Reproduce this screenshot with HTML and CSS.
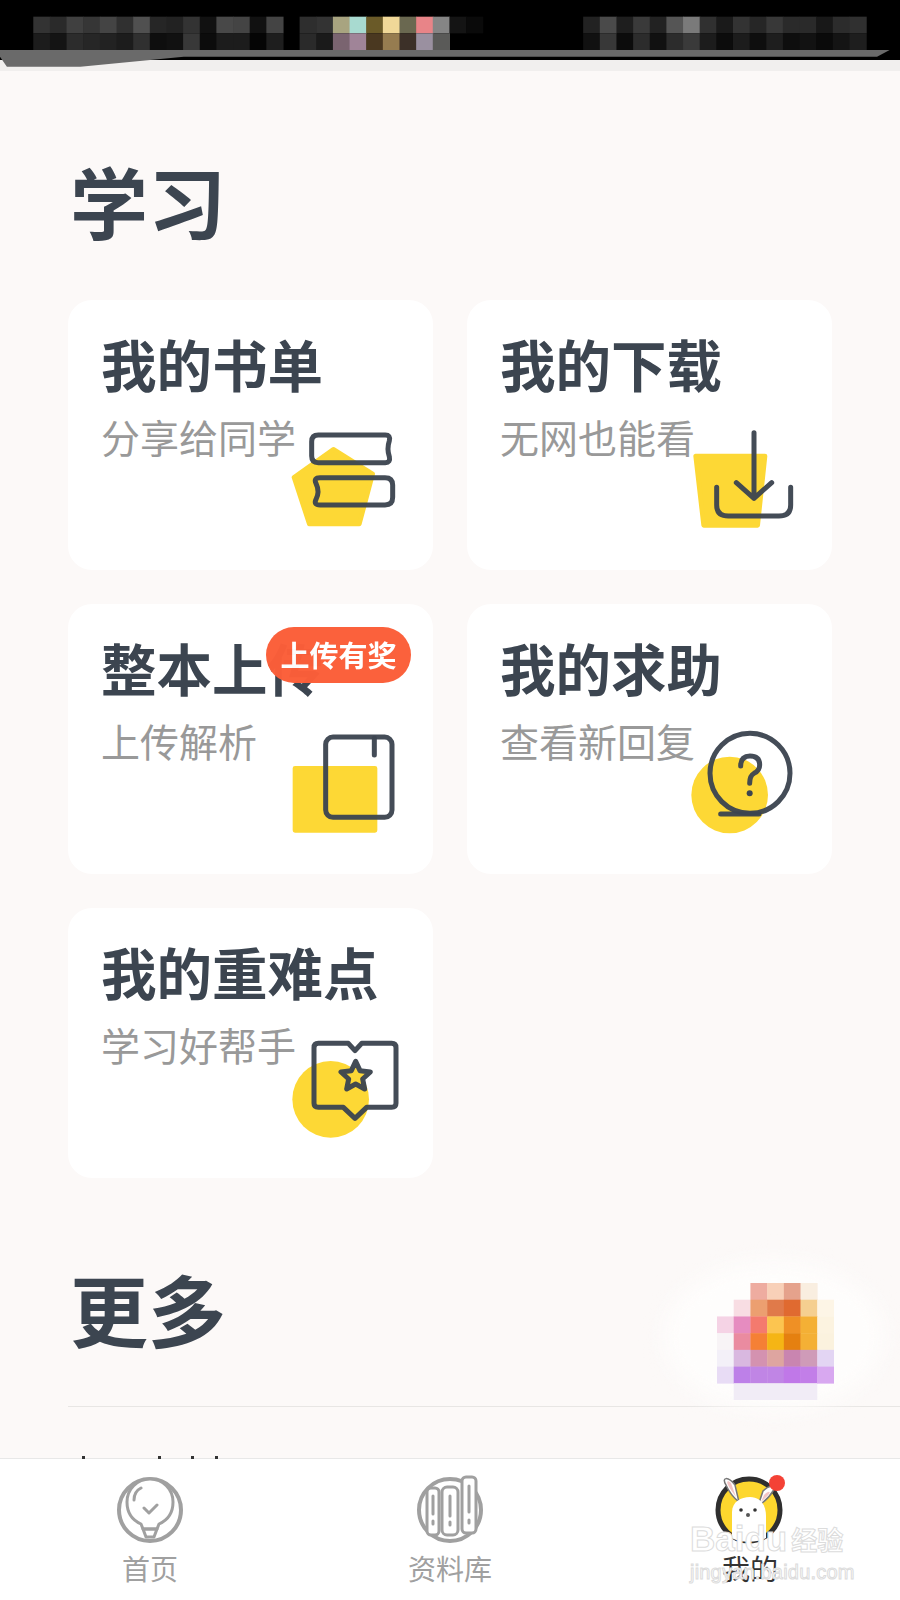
FILE: index.html
```html
<!DOCTYPE html>
<html lang="zh-CN">
<head>
<meta charset="utf-8">
<title>我的</title>
<link rel="stylesheet" href="styles.css">
</head>
<body>
<div class="page">
  <svg class="topbar" viewBox="0 0 1568 213" preserveAspectRatio="none">
    <rect width="1568" height="213" fill="#fcf9f8"/>
    <rect y="180" width="1568" height="33" fill="#f1efee"/>
    <rect width="1568" height="180" fill="#000"/>
    <g>
      <rect x="58" y="50" width="30" height="50" fill="#333"/><rect x="87" y="50" width="30" height="50" fill="#2a2a2a"/><rect x="116" y="50" width="30" height="50" fill="#404040"/><rect x="145" y="50" width="30" height="50" fill="#363636"/><rect x="174" y="50" width="30" height="50" fill="#444"/><rect x="203" y="50" width="30" height="50" fill="#303030"/><rect x="232" y="50" width="30" height="50" fill="#505050"/><rect x="261" y="50" width="30" height="50" fill="#262626"/><rect x="290" y="50" width="30" height="50" fill="#222"/><rect x="319" y="50" width="30" height="50" fill="#333"/><rect x="348" y="50" width="30" height="50" fill="#111"/><rect x="377" y="50" width="30" height="50" fill="#484848"/><rect x="406" y="50" width="30" height="50" fill="#444"/><rect x="435" y="50" width="30" height="50" fill="#111"/><rect x="464" y="50" width="30" height="50" fill="#444"/><rect x="522" y="50" width="30" height="50" fill="#2e2e2e"/><rect x="551" y="50" width="30" height="50" fill="#333"/><rect x="580" y="50" width="30" height="50" fill="#a8a480"/><rect x="609" y="50" width="30" height="50" fill="#a8dad0"/><rect x="638" y="50" width="30" height="50" fill="#6a5a28"/><rect x="667" y="50" width="30" height="50" fill="#f0d898"/><rect x="696" y="50" width="30" height="50" fill="#6a6850"/><rect x="725" y="50" width="30" height="50" fill="#e88488"/><rect x="754" y="50" width="30" height="50" fill="#858585"/><rect x="783" y="50" width="30" height="50" fill="#141414"/><rect x="812" y="50" width="30" height="50" fill="#0a0a0a"/>
      <rect x="1016" y="50" width="30" height="50" fill="#222"/><rect x="1045" y="50" width="30" height="50" fill="#4a4a4a"/><rect x="1074" y="50" width="30" height="50" fill="#1e1e1e"/><rect x="1103" y="50" width="30" height="50" fill="#3a3a3a"/><rect x="1132" y="50" width="30" height="50" fill="#222"/><rect x="1161" y="50" width="30" height="50" fill="#555"/><rect x="1190" y="50" width="30" height="50" fill="#7a7a7a"/><rect x="1219" y="50" width="30" height="50" fill="#303030"/><rect x="1248" y="50" width="30" height="50" fill="#1a1a1a"/><rect x="1277" y="50" width="30" height="50" fill="#333"/><rect x="1306" y="50" width="30" height="50" fill="#262626"/><rect x="1335" y="50" width="30" height="50" fill="#383838"/><rect x="1364" y="50" width="30" height="50" fill="#2a2a2a"/><rect x="1393" y="50" width="30" height="50" fill="#2a2a2a"/><rect x="1422" y="50" width="30" height="50" fill="#181818"/><rect x="1451" y="50" width="30" height="50" fill="#2c2c2c"/><rect x="1480" y="50" width="30" height="50" fill="#303030"/>
      <rect x="58" y="100" width="30" height="50" fill="#1c1c1c"/><rect x="87" y="100" width="30" height="50" fill="#141414"/><rect x="116" y="100" width="30" height="50" fill="#2c2c2c"/><rect x="145" y="100" width="30" height="50" fill="#262626"/><rect x="174" y="100" width="30" height="50" fill="#222"/><rect x="203" y="100" width="30" height="50" fill="#1c1c1c"/><rect x="232" y="100" width="30" height="50" fill="#303030"/><rect x="261" y="100" width="30" height="50" fill="#0e0e0e"/><rect x="290" y="100" width="30" height="50" fill="#111"/><rect x="319" y="100" width="30" height="50" fill="#383838"/><rect x="348" y="100" width="30" height="50" fill="#0c0c0c"/><rect x="377" y="100" width="30" height="50" fill="#1c1c1c"/><rect x="406" y="100" width="30" height="50" fill="#1c1c1c"/><rect x="435" y="100" width="30" height="50" fill="#050505"/><rect x="464" y="100" width="30" height="50" fill="#1e1e1e"/><rect x="522" y="100" width="30" height="50" fill="#2a2a2a"/><rect x="551" y="100" width="30" height="50" fill="#1a1a1a"/><rect x="580" y="100" width="30" height="50" fill="#7a6470"/><rect x="609" y="100" width="30" height="50" fill="#a08498"/><rect x="638" y="100" width="30" height="50" fill="#4a3820"/><rect x="667" y="100" width="30" height="50" fill="#967c50"/><rect x="696" y="100" width="30" height="50" fill="#3c3028"/><rect x="725" y="100" width="30" height="50" fill="#9a90a0"/><rect x="754" y="100" width="30" height="50" fill="#5a5a58"/>
      <rect x="1016" y="100" width="30" height="50" fill="#111"/><rect x="1045" y="100" width="30" height="50" fill="#383838"/><rect x="1074" y="100" width="30" height="50" fill="#0c0c0c"/><rect x="1103" y="100" width="30" height="50" fill="#2c2c2c"/><rect x="1132" y="100" width="30" height="50" fill="#111"/><rect x="1161" y="100" width="30" height="50" fill="#2c2c2c"/><rect x="1190" y="100" width="30" height="50" fill="#3a3a3a"/><rect x="1219" y="100" width="30" height="50" fill="#1c1c1c"/><rect x="1248" y="100" width="30" height="50" fill="#0c0c0c"/><rect x="1277" y="100" width="30" height="50" fill="#1c1c1c"/><rect x="1306" y="100" width="30" height="50" fill="#0e0e0e"/><rect x="1335" y="100" width="30" height="50" fill="#1e1e1e"/><rect x="1364" y="100" width="30" height="50" fill="#0e0e0e"/><rect x="1393" y="100" width="30" height="50" fill="#121212"/><rect x="1422" y="100" width="30" height="50" fill="#0a0a0a"/><rect x="1451" y="100" width="30" height="50" fill="#141414"/><rect x="1480" y="100" width="30" height="50" fill="#1e1e1e"/>
    </g>
    <path d="M0 150H1550L1528 170H320L140 200H12L0 170Z" fill="#6a6a6a"/>
  </svg>

  <main class="content">
    <h2 class="section-title study-title">学习</h2>
    <div class="cards">
      <div class="card">
        <div class="card-title">我的书单</div>
        <div class="card-sub">分享给同学</div>
        <svg class="icon icon-a" viewBox="0 0 480 420">
          <path class="shape" d="M190 118L308 192L268 342H118L72 202Z"/>
          <path class="line" d="M145 75H346Q362 75 358 92Q350 116 358 140Q362 158 346 158H145Q125 158 125 138V95Q125 75 145 75Z"/>
          <path class="line" d="M150 203H345Q368 203 368 225V262Q368 285 345 285H150Q130 285 138 268Q150 245 138 220Q130 203 150 203Z"/>
        </svg>
      </div>
      <div class="card">
        <div class="card-title">我的下载</div>
        <div class="card-sub">无网也能看</div>
        <svg class="icon icon-a" viewBox="0 0 480 420">
          <path class="shape" d="M80 138H288L266 346H104Z"/>
          <path class="line" d="M255 68V265M202 218L255 265L308 218M143 232V285Q143 318 178 318H330Q365 318 365 285V232"/>
        </svg>
      </div>
      <div class="card">
        <div class="card-title">整本上传</div>
        <div class="card-sub">上传解析</div>
        <svg class="icon icon-b" viewBox="0 0 510 720">
          <rect class="shape" x="105" y="475" width="240" height="186"/>
          <rect class="line" x="197" y="381" width="199" height="241" rx="22"/>
          <path class="line" d="M343 385V435"/>
        </svg>
        <span class="badge">上传有奖</span>
      </div>
      <div class="card">
        <div class="card-title">我的求助</div>
        <div class="card-sub">查看新回复</div>
        <svg class="icon icon-b" viewBox="0 0 480 420">
          <circle class="disc" cx="182" cy="255" r="115"/>
          <circle class="line" cx="243" cy="190" r="120"/>
          <path class="line" d="M155 312H270M215 168Q215 138 243 138Q272 138 272 165Q272 182 255 190Q242 197 242 220"/>
          <circle class="dot" cx="242" cy="250" r="9"/>
        </svg>
      </div>
      <div class="card">
        <div class="card-title">我的重难点</div>
        <div class="card-sub">学习好帮手</div>
        <svg class="icon icon-a" viewBox="0 0 480 420">
          <circle class="disc" cx="182" cy="238" r="115"/>
          <path class="line" d="M145 70H235L255 92L275 70H365Q378 70 378 83V250Q378 262 365 262H290L255 295L220 262H145Q132 262 132 250V83Q132 70 145 70Z"/>
          <path class="line star" d="M257 124L270 152L301 156L278 177L284 207L257 192L230 207L236 177L213 156L244 152Z"/>
        </svg>
      </div>
    </div>

    <h2 class="section-title more-title">更多</h2>
    <div class="divider"></div>
    <div class="smudge"></div>
    <svg class="mosaic" viewBox="0 0 350 350">
      <rect x="100" width="51" height="51" fill="#eeaca0"/><rect x="150" width="51" height="51" fill="#f8d0b8"/><rect x="200" width="51" height="51" fill="#e5a28c"/><rect x="250" width="51" height="51" fill="#f9eee0"/>
      <rect x="50" y="50" width="51" height="51" fill="#f8dde3"/><rect x="100" y="50" width="51" height="51" fill="#ec9f70"/><rect x="150" y="50" width="51" height="51" fill="#e07a4a"/><rect x="200" y="50" width="51" height="51" fill="#e06a30"/><rect x="250" y="50" width="51" height="51" fill="#f5cf90"/><rect x="300" y="50" width="50" height="51" fill="#fdf5e6"/>
      <rect y="100" width="51" height="51" fill="#f5d3e5"/><rect x="50" y="100" width="51" height="51" fill="#e68cc0"/><rect x="100" y="100" width="51" height="51" fill="#f47a6e"/><rect x="150" y="100" width="51" height="51" fill="#fcc550"/><rect x="200" y="100" width="51" height="51" fill="#ef9025"/><rect x="250" y="100" width="51" height="51" fill="#f4b035"/><rect x="300" y="100" width="50" height="51" fill="#fcf3e0"/>
      <rect y="150" width="51" height="51" fill="#f8f4f6"/><rect x="50" y="150" width="51" height="51" fill="#ea8ba0"/><rect x="100" y="150" width="51" height="51" fill="#f58035"/><rect x="150" y="150" width="51" height="51" fill="#f5b515"/><rect x="200" y="150" width="51" height="51" fill="#e58010"/><rect x="250" y="150" width="51" height="51" fill="#f4b035"/><rect x="300" y="150" width="50" height="51" fill="#fbf2de"/>
      <rect y="200" width="51" height="51" fill="#f3f0f8"/><rect x="50" y="200" width="51" height="51" fill="#d9b8e0"/><rect x="100" y="200" width="51" height="51" fill="#d492b0"/><rect x="150" y="200" width="51" height="51" fill="#dea5a0"/><rect x="200" y="200" width="51" height="51" fill="#c985b0"/><rect x="250" y="200" width="51" height="51" fill="#cf9bb8"/><rect x="300" y="200" width="50" height="51" fill="#e3d5f3"/>
      <rect y="250" width="51" height="51" fill="#e8dcf5"/><rect x="50" y="250" width="51" height="51" fill="#bd80e8"/><rect x="100" y="250" width="51" height="51" fill="#c085e5"/><rect x="150" y="250" width="51" height="51" fill="#c085e5"/><rect x="200" y="250" width="51" height="51" fill="#c078e8"/><rect x="250" y="250" width="51" height="51" fill="#c27ee8"/><rect x="300" y="250" width="50" height="51" fill="#d8a8f0"/>
      <rect x="50" y="300" width="250" height="50" fill="#f1ecf6"/>
    </svg>
  </main>

  <nav class="tabbar">
    <svg class="specks" viewBox="0 0 220 3"><rect x="82" width="3" height="3"/><rect x="158" width="3" height="3"/><rect x="191" width="3" height="3"/><rect x="215" width="3" height="3"/></svg>
    <div class="tab">
      <svg class="tab-icon" viewBox="0 0 72 72">
        <circle class="tab-line" cx="36" cy="36" r="31"/>
        <path class="tab-line tab-thin tab-fill" d="M27 50C18 46 13 38 13 28C13 15 23 5 36 5C49 5 59 15 59 28C59 38 54 46 45 50L43 55H29Z"/>
        <path class="tab-line tab-thin" d="M20 26C20 20 23 16 27 14M30 34L35 39L43 31M29 55H43L40 63H32Z"/>
      </svg>
      <span class="tab-label">首页</span>
    </div>
    <div class="tab">
      <svg class="tab-icon" viewBox="0 0 72 72">
        <circle class="tab-line" cx="36" cy="36" r="31"/>
        <rect class="tab-line tab-thin tab-fill" x="13" y="14" width="12" height="47" rx="4"/>
        <rect class="tab-line tab-thin tab-fill" x="28" y="13" width="16" height="48" rx="5"/>
        <rect class="tab-line tab-thin tab-fill" x="48" y="3" width="14" height="56" rx="4"/>
        <path class="tab-line tab-thin" d="M19 22V40M19 47V50M36 22V42M36 48V51M55 12V38M55 46V49"/>
      </svg>
      <span class="tab-label">资料库</span>
    </div>
    <div class="tab">
      <svg class="tab-icon" viewBox="0 0 72 72">
        <circle cx="35" cy="36" r="31" fill="#fdd72e" stroke="#2f2f2f" stroke-width="5"/>
        <path d="M21 11C14 2 7 3 12 11C15 18 20 24 25 28ZM49 17C56 10 62 12 59 17C55 24 50 28 44 32Z" fill="#fff" stroke="#777" stroke-width="1.5"/>
        <path d="M17 9C14 6 12 7 14 11C16 15 19 19 22 23ZM50 21C54 17 57 17 55 20C53 23 50 25 47 28Z" fill="#f3c5c5"/>
        <path d="M18 38C18 28 27 23 36 23C47 23 52 32 52 42V64C44 69 26 69 18 64Z" fill="#fff"/>
        <circle cx="27" cy="36" r="1.8" fill="#333"/><circle cx="41" cy="36" r="1.8" fill="#333"/><circle cx="34" cy="41" r="2" fill="#555"/>
        <circle cx="63" cy="9" r="8" fill="#f44236"/>
      </svg>
      <span class="tab-label tab-active">我的</span>
    </div>
  </nav>

  <div class="watermark">
    <div class="wm-row"><span class="wm-brand">Baidu</span><span class="wm-cn">经验</span></div>
    <div class="wm-url">jingyan.baidu.com</div>
  </div>
</div>
</body>
</html>
```
FILE: styles.css
```css
* { box-sizing: border-box; }

html, body {
  margin: 0;
  padding: 0;
}

body {
  font-family: "Noto Sans CJK SC", "Noto Sans", sans-serif;
  background: #fcf9f8;
}

.page {
  position: relative;
  width: 900px;
  height: 1600px;
  overflow: hidden;
  background: #fcf9f8;
}

.topbar {
  display: block;
  width: 900px;
  height: 71px;
}

.content {
  position: relative;
  padding-left: 68px;
}

.section-title {
  margin: 0;
  padding-left: 2px;
  font-size: 78px;
  line-height: 84px;
  font-weight: 700;
  color: #3c4550;
}

.study-title { padding-top: 87px; }
.more-title { padding-top: 88px; }

.cards {
  display: grid;
  grid-template-columns: 365px 365px;
  grid-auto-rows: 270px;
  gap: 34px;
  margin-top: 58px;
}

.card {
  position: relative;
  padding: 33px 0 0 33px;
  background: #fff;
  border-radius: 24px;
}

.card-title {
  font-size: 55.5px;
  line-height: 60px;
  font-weight: 700;
  color: #3c4550;
}

.card-sub {
  margin-top: 21px;
  font-size: 39px;
  line-height: 44px;
  color: #999;
}

.icon {
  position: absolute;
  left: 202px;
}

.icon-a { top: 110px; width: 160px; height: 140px; }
.icon-b { top: 106px; width: 160px; height: 140px; }
.card:nth-child(3) .icon-b { top: 6px; left: 192px; width: 170px; height: 240px; }
.card:nth-child(5) .icon-a { top: 112px; }

.shape {
  fill: #fdd835;
  stroke: #fdd835;
  stroke-width: 14;
  stroke-linejoin: round;
}

.disc { fill: #fdd835; }
.dot { fill: #3c4550; }

.line {
  fill: none;
  stroke: #3c4550;
  stroke-width: 15;
  stroke-linecap: round;
  stroke-linejoin: round;
  opacity: 0.96;
}

.star { fill: #fdd835; }

.badge {
  position: absolute;
  left: 198px;
  top: 23px;
  width: 145px;
  height: 56px;
  border-radius: 28px;
  background: #fb5e39;
  color: #fff;
  font-size: 29px;
  line-height: 54px;
  font-weight: 700;
  text-align: center;
  opacity: 0.98;
}

.divider {
  margin-top: 56px;
  height: 1px;
  background: #e8e6e4;
}

.smudge {
  position: absolute;
  left: 664px;
  top: 1190px;
  width: 220px;
  height: 150px;
  border-radius: 50%;
  background: #fefdfc;
  filter: blur(12px);
}

.mosaic {
  position: absolute;
  left: 717px;
  top: 1212px;
  width: 117px;
  height: 117px;
}

.tabbar {
  position: absolute;
  left: 0;
  top: 1458px;
  display: flex;
  width: 900px;
  height: 142px;
  background: #fff;
  border-top: 1px solid #e8e8e8;
}

.specks {
  position: absolute;
  left: 0;
  top: -3px;
  width: 220px;
  height: 3px;
  fill: #333;
}

.tab {
  display: flex;
  flex: 1;
  flex-direction: column;
  align-items: center;
  padding-top: 15px;
}

.tab-icon {
  display: block;
  width: 72px;
  height: 72px;
}

.tab-line {
  fill: none;
  stroke: #a0a0a0;
  stroke-width: 4;
  stroke-linecap: round;
  stroke-linejoin: round;
}

.tab-thin { stroke-width: 3; }
.tab-fill { fill: #fff; }

.tab-label {
  margin-top: 4px;
  font-size: 28px;
  line-height: 36px;
  color: #a0a0a0;
}

.tab-active { color: #333; }

.watermark {
  position: absolute;
  left: 690px;
  top: 1520px;
  width: 170px;
  color: #fff;
  -webkit-text-stroke: 1px #dcdcdc;
  font-family: "Liberation Sans", sans-serif;
}

.wm-row {
  display: flex;
  align-items: center;
  gap: 4px;
}

.wm-brand {
  font-size: 35px;
  line-height: 38px;
  font-weight: 700;
}

.wm-cn {
  font-family: "Noto Sans CJK SC", sans-serif;
  font-size: 26px;
  line-height: 38px;
  font-weight: 700;
}

.wm-url {
  margin-top: 2px;
  font-size: 20px;
  line-height: 24px;
  letter-spacing: 0.2px;
}
```
